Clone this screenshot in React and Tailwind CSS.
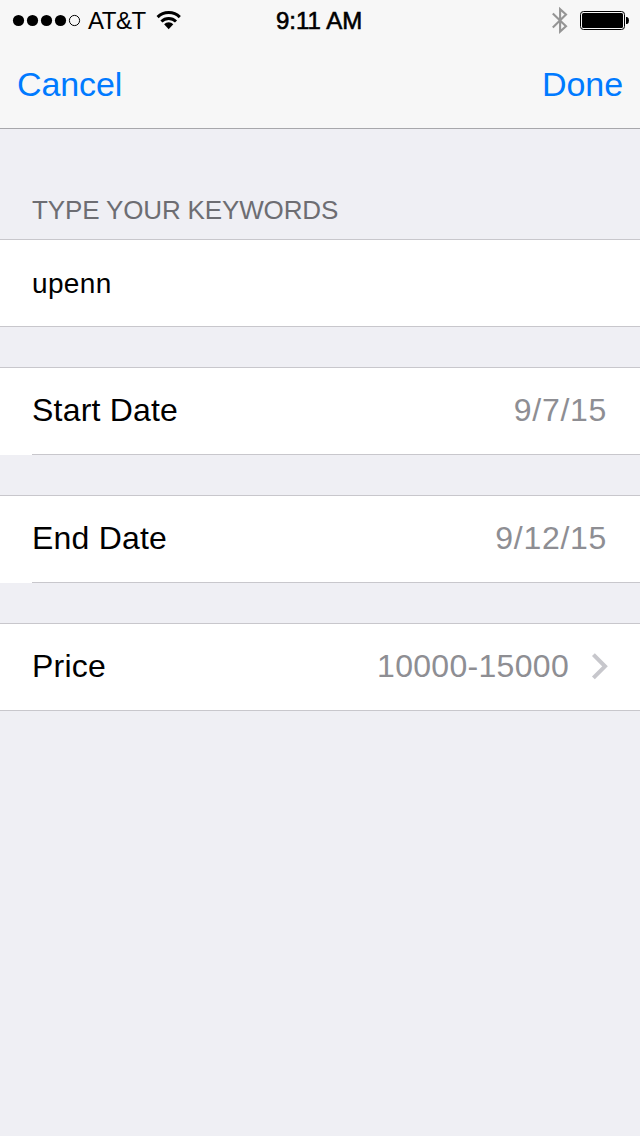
function StatusBar() {
  return (
    <div className="grid h-10 grid-cols-[276px_1fr_88px] text-2xl leading-10">
      <div className="flex">
        <svg className="ml-[12px] h-10 w-[70px] shrink-0" viewBox="12 0 70 40" aria-hidden="true">
          <circle cx="18.5" cy="20.5" r="5.6" />
          <circle cx="32.5" cy="20.5" r="5.6" />
          <circle cx="46.5" cy="20.5" r="5.6" />
          <circle cx="60.5" cy="20.5" r="5.6" />
          <circle cx="74.5" cy="20.5" r="5.1" fill="none" stroke="#000" strokeWidth="1" />
        </svg>
        <span className="ml-[6px] w-[66px] shrink-0 pt-px tracking-[-0.5px]">AT&amp;T</span>
        <svg className="h-10 w-[30px] shrink-0" viewBox="154 0 30 40" fill="none" stroke="#000" aria-hidden="true">
          <path d="M157.6 17.1a15.6 15.6 0 0 1 22.2 0" strokeWidth="3" />
          <path d="M161.4 21.5a10.3 10.3 0 0 1 14.6 0" strokeWidth="2.9" />
          <path d="M168.7 29.2l-4.6-4.9a6.4 6.4 0 0 1 9.2 0z" fill="#000" stroke="none" />
        </svg>
      </div>
      <div className="pt-px [-webkit-text-stroke:0.6px_#000]">9:11 AM</div>
      <svg className="h-10 w-[88px]" viewBox="552 0 88 40" fill="none" aria-hidden="true">
        <path d="M552.8 13.4l13.2 12.8-5.9 5.4V9.2l5.9 5.4-13.2 12.8" stroke="#959595" strokeWidth="2.1" />
        <rect x="580.5" y="11.5" width="44" height="18" rx="3" stroke="#000" />
        <rect x="582" y="13" width="41" height="15" rx="1.5" fill="#000" />
        <path d="M626 17h1.2q1.8 .8 1.8 3.5t-1.8 3.5H626z" fill="#000" />
      </svg>
    </div>
  );
}

function NavBar() {
  return (
    <div className="flex h-[88px] justify-between pr-[17px] pl-[17px] pt-px text-[34px] leading-[87px] text-[#007aff]">
      <button type="button" className="tracking-[-0.1px]">Cancel</button>
      <button type="button" className="tracking-[-0.1px]">Done</button>
    </div>
  );
}

function DetailRow({ label, value, inset, chevron }) {
  return (
    <div className="relative mt-10 flex h-[88px] items-center border-t border-[#c8c7cc] bg-white pb-0.5 pl-8 text-[32px] leading-[85px]">
      <span className="grow tracking-[0.2px]">{label}</span>
      <span className={chevron ? "mr-[21px] tracking-[0.3px] text-[#8e8e93]" : "mr-[33px] tracking-[0.7px] text-[#8e8e93]"}>{value}</span>
      {chevron && (
        <svg className="mr-[31px] h-[28px] w-[19px]" viewBox="0 0 19 28" fill="none" aria-hidden="true">
          <path d="M3.4 1.7l11.6 11.6L3.4 24.9" stroke="#c7c7cc" strokeWidth="4" />
        </svg>
      )}
      <div className={inset ? "absolute right-0 bottom-0 left-8 h-px bg-[#c8c7cc]" : "absolute right-0 bottom-0 left-0 h-px bg-[#c8c7cc]"} />
    </div>
  );
}

export default function App() {
  return (
    <div className="flex h-[1136px] w-[640px] flex-col overflow-hidden bg-[#efeff4] font-['Liberation_Sans',Arial,sans-serif] text-black">
      <header className="h-[129px] border-b border-[#a7a7ab] bg-[#f7f7f7]">
        <StatusBar />
        <NavBar />
      </header>
      <main>
        <h2 className="h-[110px] pt-[66px] pl-8 text-[26px] leading-[30px] tracking-[-0.14px] text-[#6d6d72]">TYPE YOUR KEYWORDS</h2>
        <div className="h-[88px] border-y border-[#c8c7cc] bg-white pl-8 text-[28px] leading-[87px] tracking-[0.35px]">upenn</div>
        <DetailRow label="Start Date" value="9/7/15" inset />
        <DetailRow label="End Date" value="9/12/15" inset />
        <DetailRow label="Price" value="10000-15000" chevron />
      </main>
    </div>
  );
}
